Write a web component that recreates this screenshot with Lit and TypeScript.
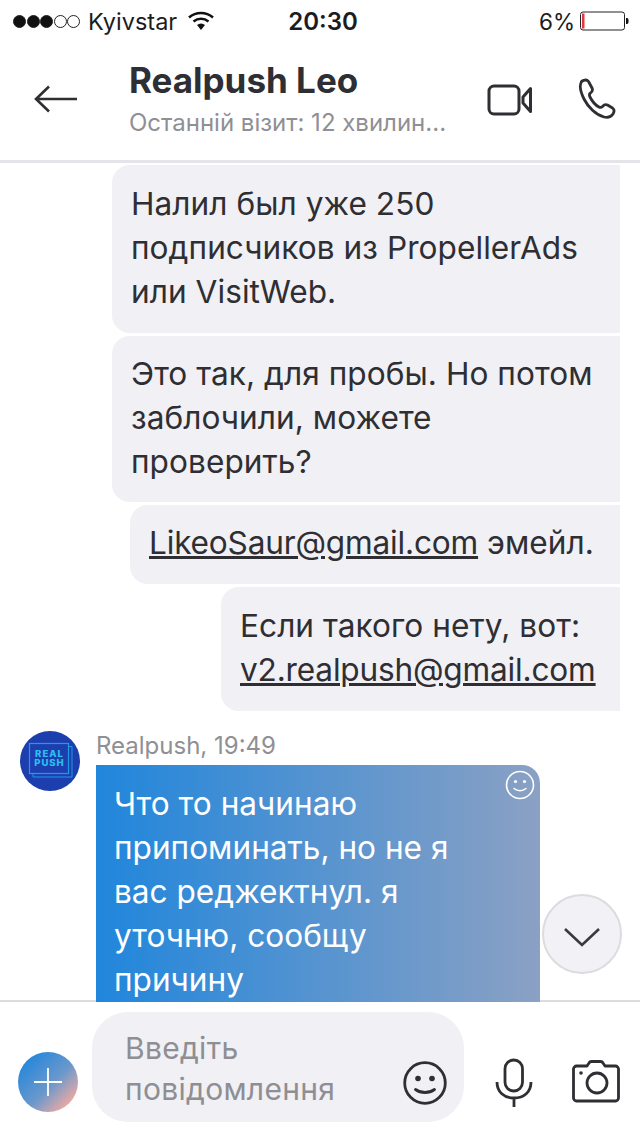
import { LitElement, html, css } from "lit";
import { customElement } from "lit/decorators.js";

const bubbles = [
  { cls: "b1", lines: html`Налил был уже 250<br />подписчиков из PropellerAds<br />или VisitWeb.` },
  { cls: "b2", lines: html`Это так, для пробы. Но потом<br />заблочили, можете<br />проверить?` },
  { cls: "b3", lines: html`<u>LikeoSaur@gmail.com</u> эмейл.` },
  { cls: "b4", lines: html`Если такого нету, вот:<br /><u>v2.realpush@gmail.com</u>` },
];

@customElement("app-root")
export class AppRoot extends LitElement {
  static styles = css`
    :host { display: block; width: 640px; height: 1136px; overflow: hidden; position: relative; background: #fff;
      font-family: Inter, "Liberation Sans", sans-serif; color: #2e2e33; }
    * { box-sizing: border-box; }
    .status { height: 44px; display: grid; grid-template-columns: 1fr auto 1fr; align-items: center; padding: 0 10px 2px 13px; font-size: 23.5px; color: #1c1c1e; }
    .st-left { display: flex; align-items: center; }
    .dots { display: flex; gap: .5px; margin-right: 8px; }
    .dot { width: 13px; height: 13px; border-radius: 50%; border: 1px solid #222; }
    .dot.on { background: #111; }
    .wifi { margin-left: 11px; }
    .time { font-weight: 600; font-size: 24px; margin-left: 3px; }
    .st-right { display: flex; justify-content: flex-end; align-items: center; gap: 5px; font-size: 22.5px; }
    .header { height: 119px; border-bottom: 3px solid #e4e4ea; display: flex; padding-left: 34px; align-items: flex-start; }
    .back { margin-top: 41px; flex: none; }
    .titles { margin-left: 51px; width: 358px; flex: none; padding-top: 14px; }
    .name { font-size: 35px; font-weight: 700; line-height: 44px; color: #2e2e35; }
    .seen { font-size: 24px; line-height: 30px; margin-top: 6px; color: #8f8f94; white-space: nowrap; }
    .video { margin-top: 40px; flex: none; }
    .phone { margin: 34px 0 0 45px; flex: none; }
    .chat { position: relative; z-index: 1; padding: 2px 20px 0 0; display: flex; flex-direction: column; align-items: flex-end; gap: 3px; height: 839px; overflow: hidden; }
    .bubble { background: #f0f0f5; font-size: 31.6px; line-height: 44px; letter-spacing: .05px; color: #2e2e33; border-radius: 18px 0 0 18px; white-space: nowrap; flex: none; padding-left: 19px; }
    .bubble u { letter-spacing: -.18px; }
    .b1 { width: 508px; height: 168px; padding-top: 17px; }
    .b2 { width: 508px; height: 166px; padding-top: 16px; }
    .b3 { width: 490px; height: 79px; padding-top: 16px; }
    .b4 { width: 399px; height: 124px; padding-top: 17px; }
    .incoming { align-self: stretch; display: flex; margin-top: 17px; padding-left: 20px; flex: none; }
    .avatar { width: 60px; height: 60px; flex: none; }
    .in-col { margin-left: 16px; }
    .sender { font-size: 24px; line-height: 30px; color: #8f8f94; margin-bottom: 4px; }
    .grad { position: relative; width: 444px; height: 237px; border-radius: 0 18px 0 0; padding: 17px 0 0 18px; color: #fff; font-size: 31.6px; line-height: 44px;
      background: linear-gradient(90deg, #2086dc, #8ba1c4); white-space: nowrap; overflow: hidden; }
    .react { position: absolute; right: 5px; top: 5px; }
    .down { position: absolute; z-index: 2; left: 542px; top: 894px; width: 80px; height: 80px; border-radius: 50%; background: #f2f2f6; border: 2px solid #dcdce0; display: flex; align-items: center; justify-content: center; padding-top: 5px; }
    .composer { position: absolute; left: 0; right: 0; top: 1000px; height: 136px; background: #fff; border-top: 2px solid #dcdce0; display: flex; align-items: flex-start; padding-left: 18px; }
    .plus { flex: none; margin-top: 50px; width: 60px; height: 60px; border-radius: 50%; background: linear-gradient(135deg, #2a88da 15%, #6a98cc 55%, #e7a9a4 85%); display: flex; align-items: center; justify-content: center; }
    .input { position: relative; flex: none; margin: 10px 0 0 14px; width: 372px; height: 110px; background: #f0f0f5; border-radius: 36px; padding: 16px 0 0 33px; font-size: 30px; line-height: 41px; color: #8e8e93; letter-spacing: .3px; }
    .smile { position: absolute; left: 310.500px; top: 49px; }
    .mic { flex: none; margin: 56px 0 0 31px; }
    .cam { flex: none; margin: 58px 0 0 39px; }
  `;

  render() {
    return html`
      <div class="status">
        <div class="st-left">
          <div class="dots">
            <span class="dot on"></span><span class="dot on"></span><span class="dot on"></span><span class="dot"></span><span class="dot"></span>
          </div>
          <span>Kyivstar</span>
          <svg class="wifi" width="26" height="20" viewBox="0 0 26 20"><path d="M1 6.500C8 .5 18 .5 25 6.500" fill="none" stroke="#111" stroke-width="2.600"/><path d="M5.500 10.500c4.500-3.600 10.500-3.600 15 0" fill="none" stroke="#111" stroke-width="2.600"/><path d="M9 14c2.500-2 5.500-2 8 0l-4 5z" fill="#111"/></svg>
        </div>
        <div class="time">20:30</div>
        <div class="st-right">
          <span>6%</span>
          <svg width="50" height="20" viewBox="0 0 50 20"><rect x=".5" y="1" width="44" height="18" rx="2.500" fill="none" stroke="#222"/><rect x="2" y="2.500" width="2.500" height="15" fill="#e0383e"/><path d="M46 7h1.200a2 2 0 0 1 1.300 2v2a2 2 0 0 1-1.300 2H46z" fill="#111"/></svg>
        </div>
      </div>
      <div class="header">
        <svg class="back" width="44" height="28" viewBox="0 0 44 28"><path d="M43 14H2M15 1.500 2 14l13 12.500" fill="none" stroke="#2e2e33" stroke-width="2.600"/></svg>
        <div class="titles">
          <div class="name">Realpush Leo</div>
          <div class="seen">Останній візит: 12 хвилин...</div>
        </div>
        <svg class="video" width="46" height="32" viewBox="0 0 46 32"><rect x="2" y="2" width="30" height="28" rx="5" fill="none" stroke="#2e2e33" stroke-width="3"/><path d="M43.500 4.500v23L36 19v-6z" fill="none" stroke="#2e2e33" stroke-width="3" stroke-linejoin="round"/></svg>
        <svg class="phone" width="38" height="44" viewBox="0 0 38 44"><path d="M3.500 3.500c3-2 5.500-2 7 0l3.500 6.500c1 2 .5 3.500-1.500 5-1.500 1-1.500 2-.5 4 2 4 5 8 9 10 1.500.8 2.500.5 3.500-.5 1.500-1.800 3-2.500 5-1.500l5 3c2 1.500 2 3.500.5 6-2 3-5 4-9 3-8-2-16-10-20-18-3.500-7-5.500-13.500-2-18z" fill="none" stroke="#2e2e33" stroke-width="2.800" stroke-linejoin="round"/></svg>
      </div>
      <div class="chat">
        ${bubbles.map((b) => html`<div class="bubble ${b.cls}">${b.lines}</div>`)}
        <div class="incoming">
          <svg class="avatar" viewBox="0 0 60 60">
            <circle cx="30" cy="30" r="30" fill="#1d3fae"/>
            <path d="M48.500 15.500h3.500v30.500H13v-3.500" fill="none" stroke="#1c9be8" stroke-width="1"/>
            <rect x="9.500" y="12.500" width="39" height="30" fill="#1d3fae" stroke="#1c9be8" stroke-width="1.200"/>
            <text x="29.500" y="25.500" text-anchor="middle" font-size="9.500" font-weight="800" letter-spacing="1" fill="#2cc0f2" font-family="Inter, sans-serif">REAL</text>
            <text x="29.500" y="34.500" text-anchor="middle" font-size="9.500" font-weight="800" letter-spacing="1" fill="#2cc0f2" font-family="Inter, sans-serif">PUSH</text>
          </svg>
          <div class="in-col">
            <div class="sender">Realpush, 19:49</div>
            <div class="grad">
              Что то начинаю<br />припоминать, но не я<br />вас реджектнул. я<br />уточню, сообщу<br />причину
              <svg class="react" width="30" height="30" viewBox="0 0 30 30"><circle cx="15" cy="15" r="13.500" fill="none" stroke="#fff" stroke-width="1.600"/><circle cx="10.500" cy="11.500" r="1.600" fill="#fff"/><circle cx="19.500" cy="11.500" r="1.600" fill="#fff"/><path d="M9 18.500c3.500 3 8.500 3 12 0" fill="none" stroke="#fff" stroke-width="1.600" stroke-linecap="round"/></svg>
            </div>
          </div>
        </div>
      </div>
      <div class="down">
        <svg width="38" height="22" viewBox="0 0 38 22"><path d="M2 3l17 16L36 3" fill="none" stroke="#3a3a40" stroke-width="2.600"/></svg>
      </div>
      <div class="composer">
        <div class="plus"><svg width="30" height="30" viewBox="0 0 30 30"><path d="M15 1v28M1 15h28" stroke="#fff" stroke-width="1.800"/></svg></div>
        <div class="input">Введіть<br />повідомлення
          <svg class="smile" width="44" height="44" viewBox="0 0 44 44"><circle cx="22" cy="22" r="20.300" fill="none" stroke="#2e2e33" stroke-width="2.800"/><circle cx="15" cy="17.500" r="2.800" fill="#2e2e33"/><circle cx="29" cy="17.500" r="2.800" fill="#2e2e33"/><path d="M12.500 28.500c5.500 4 13.500 4 19 0" fill="none" stroke="#2e2e33" stroke-width="2.800" stroke-linecap="round"/></svg>
        </div>
        <svg class="mic" width="38" height="50" viewBox="0 0 38 50"><rect x="10" y="2" width="17.500" height="31" rx="8.700" fill="none" stroke="#2e2e33" stroke-width="2.800"/><path d="M2 24c0 10 7 16 17 16s17-6 17-16M19 40v9" fill="none" stroke="#2e2e33" stroke-width="2.800"/></svg>
        <svg class="cam" width="48" height="44" viewBox="0 0 48 44"><path d="M4.500 6H15l2-3c.5-1 1.500-1.500 2.500-1.500h9c1 0 2 .5 2.500 1.500l2 3h10.500c1.500 0 3 1.500 3 3v29c0 1.500-1.500 3-3 3h-39c-1.500 0-3-1.500-3-3V9c0-1.500 1.500-3 3-3z" fill="none" stroke="#2e2e33" stroke-width="2.800" stroke-linejoin="round"/><circle cx="25" cy="23" r="10" fill="none" stroke="#2e2e33" stroke-width="2.800"/><circle cx="9" cy="13" r="1.800" fill="#2e2e33"/></svg>
      </div>
    `;
  }
}
